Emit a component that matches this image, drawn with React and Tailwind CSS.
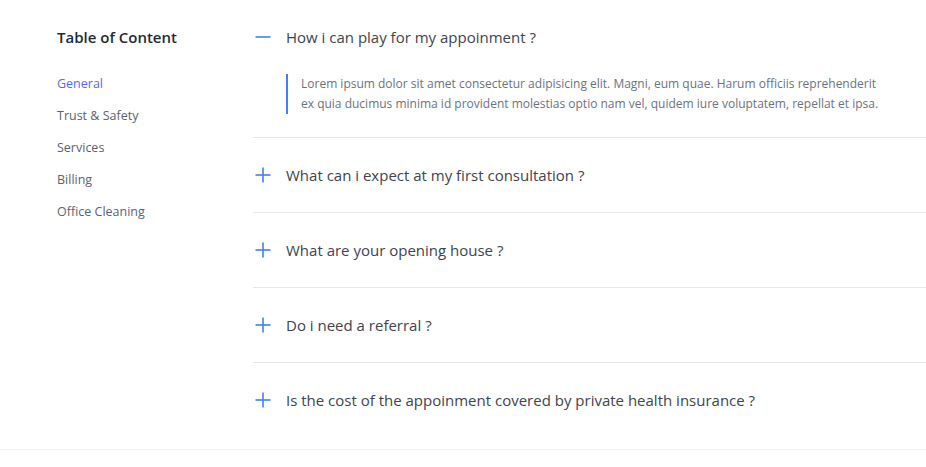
import { useState } from 'react';

const topics = ['General', 'Trust & Safety', 'Services', 'Billing', 'Office Cleaning'];

const faqs = [
  {
    q: 'How i can play for my appoinment ?',
    a: 'Lorem ipsum dolor sit amet consectetur adipisicing elit. Magni, eum quae. Harum officiis reprehenderit ex quia ducimus minima id provident molestias optio nam vel, quidem iure voluptatem, repellat et ipsa.',
  },
  { q: 'What can i expect at my first consultation ?', a: 'Lorem ipsum dolor sit amet consectetur adipisicing elit.' },
  { q: 'What are your opening house ?', a: 'Lorem ipsum dolor sit amet consectetur adipisicing elit.' },
  { q: 'Do i need a referral ?', a: 'Lorem ipsum dolor sit amet consectetur adipisicing elit.' },
  { q: 'Is the cost of the appoinment covered by private health insurance ?', a: 'Lorem ipsum dolor sit amet consectetur adipisicing elit.' },
];

function ToggleIcon({ open }) {
  return (
    <svg width="16" height="16" viewBox="0 0 16 16" fill="none" stroke="#3b82f6" strokeWidth="1.6" strokeLinecap="butt">
      <path d="M0.5 8h15" />
      {!open && <path d="M8 0.5v15" />}
    </svg>
  );
}

export default function App() {
  const [openIndex, setOpenIndex] = useState(0);

  return (
    <section className="w-full border-b border-[#efefef] bg-white font-['Open_Sans',sans-serif]">
      <div className="flex">
        {/* sidebar */}
        <aside className="w-[253px] shrink-0 pl-[57px] pt-[26px]">
          <h2 className="text-[15px] font-semibold text-[#1f2937] leading-[22px]">Table of Content</h2>
          <ul className="mt-[20px] flex flex-col">
            {topics.map((t, i) => (
              <li key={t} className={`h-[32px] flex items-center text-[12.5px] ${i === 0 ? 'text-[#4f6bf5]' : 'text-[#5b6270]'}`}>
                {t}
              </li>
            ))}
          </ul>
        </aside>

        {/* accordion */}
        <div className="flex-1 min-w-0">
          {faqs.map((item, i) => (
            <div key={item.q} className={i < faqs.length - 1 ? 'border-b border-[#e6e6ea]' : ''}>
              <button
                type="button"
                onClick={() => setOpenIndex(openIndex === i ? -1 : i)}
                className="flex w-full items-center pl-[2px] pt-[26px] pb-[26px] text-left"
              >
                <ToggleIcon open={openIndex === i} />
                <span className="ml-[15px] text-[15px] leading-[22px] text-[#3e4450]">{item.q}</span>
              </button>
              {openIndex === i && (
                <div className="pl-[33px] pb-[23px]">
                  <p className="border-l-2 border-[#3b82f6] pl-[13px] text-[12px] leading-[20px] text-[#6b7280] max-w-[600px]">
                    {item.a}
                  </p>
                </div>
              )}
            </div>
          ))}
          <div className="h-[12px]" />
        </div>
      </div>
    </section>
  );
}
